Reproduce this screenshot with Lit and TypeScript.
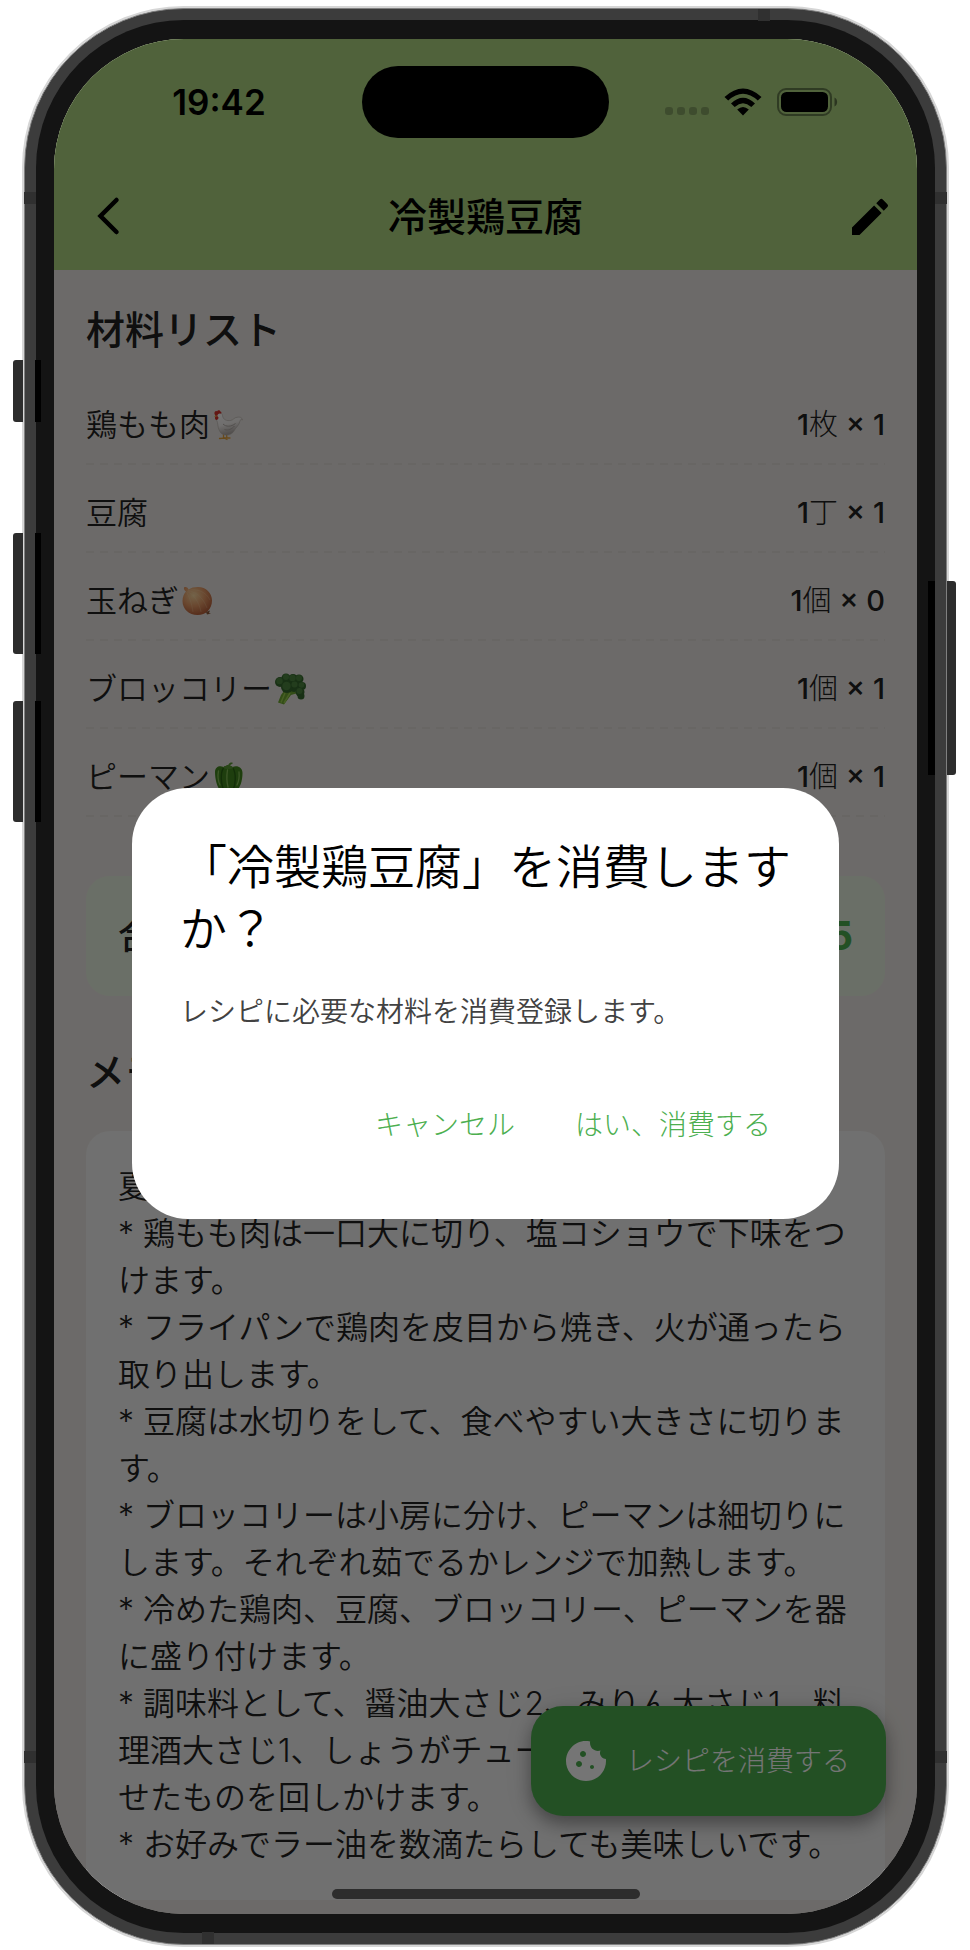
import { LitElement, html, css, svg, nothing } from "lit";
import { customElement, state } from "lit/decorators.js";

const hen = svg`
  <svg class="emoji" viewBox="0 0 32 32" role="img" aria-label="ニワトリ">
    <defs>
      <linearGradient id="hen-body" x1=".3" y1="0" x2=".6" y2="1">
        <stop offset="0" stop-color="#ffffff"/>
        <stop offset=".5" stop-color="#f4f0ee"/>
        <stop offset="1" stop-color="#a39c98"/>
      </linearGradient>
    </defs>
    <g fill="none" stroke="#e3a13c" stroke-width="1.300" stroke-linecap="round">
      <path d="M11.500 24 L11.500 29 M7.500 29.500 L12.500 29.200 L15 30.500"/>
      <path d="M14.500 24 L14.800 28.500 M12.500 29 L18 29"/>
    </g>
    <path d="M4.500 6 C6 2.500 10 3 10.500 6.500 C11 11 15 12 18.500 11.500 C21.500 11 22 8.500 25 8.300 C28 7.500 30 8.500 30.500 11 C29 10.300 28.300 10.500 28 12 C27 17 23.500 18.500 22 22 C19.500 26.500 12.500 27.500 9 24 C5 19.500 6.500 14 4.500 11 Z" fill="url(#hen-body)" stroke="#b8b1ad" stroke-width=".6"/>
    <path d="M11 15 C14 18 19 18 23.500 14.500 M12.500 20.500 C16 22 20 20 22.500 17" fill="none" stroke="#b3aca8" stroke-width="1"/>
    <path d="M2.500 5 C2 2.500 4 1.500 5 2.500 C6 .5 8 1 8.300 2.500 C9.500 2.500 9.800 4 9 4.800 C7 4 5.500 5 5.300 7 L6.500 8.500 C6.500 11 3.500 12 3 9.500 C2.800 8 4 6.500 2.500 5 Z" fill="#d8322c"/>
    <path d="M1.800 7.500 L4.500 6 L4.500 8 Z" fill="#e8b04a"/>
  </svg>`;

const onion = svg`
  <svg class="emoji" viewBox="0 0 32 32" role="img" aria-label="玉ねぎ">
    <defs>
      <radialGradient id="onion-skin" cx=".38" cy=".3" r=".75">
        <stop offset="0" stop-color="#fbd9a0"/>
        <stop offset=".5" stop-color="#e79c68"/>
        <stop offset="1" stop-color="#b65c38"/>
      </radialGradient>
    </defs>
    <path d="M3 2.500 C4.500 1.500 6.500 2 7.500 4.500 C10 2.800 13 2 17 2 C25 2 31 8 31 15.500 C31 24 25 30 16.500 30 C8 30 1.500 24 1.500 16 C1.500 12 3 8.500 5 6.500 C3.500 5.500 2.500 4 3 2.500 Z" fill="url(#onion-skin)"/>
    <g fill="none" stroke="#fbe3b8" stroke-opacity=".3" stroke-width=".8">
      <path d="M6.500 6 C14 6 22 12 26 23"/>
      <path d="M6 6.500 C12 9 18 16 20 27"/>
      <path d="M5.500 7 C8 11 11 19 12 27"/>
      <path d="M7 5.500 C16 3 25 7 29 15"/>
    </g>
    <path d="M25 27 L29 25.500 L28 28 L30 28.500 L26 29.500 Z" fill="#8b5a3c"/>
  </svg>`;

const broccoli = svg`
  <svg class="emoji" viewBox="0 0 32 32" role="img" aria-label="ブロッコリー">
    <path d="M10 18 L18 16 L24 20 L17 22 L10 31.500 L4 29.500 L7 22 Z" fill="#6fa832"/>
    <path d="M11 20 L7 29.500 M16 20 L10 30" stroke="#9bd050" stroke-width="1.500" fill="none"/>
    <g fill="#36692e">
      <circle cx="6" cy="9" r="5"/><circle cx="12" cy="5" r="4.500"/>
      <circle cx="19" cy="6" r="5"/><circle cx="25" cy="6" r="4.500"/>
      <circle cx="28" cy="13" r="4"/><circle cx="26" cy="19" r="4.500"/>
      <circle cx="27" cy="23" r="3.500"/><circle cx="20" cy="13" r="6"/>
      <circle cx="13" cy="14" r="6"/>
    </g>
    <g fill="#4c8540">
      <circle cx="5.500" cy="8" r="3.200"/><circle cx="12" cy="4" r="3"/>
      <circle cx="18.500" cy="5" r="3.200"/><circle cx="25" cy="5" r="3"/>
      <circle cx="27.500" cy="12" r="2.800"/><circle cx="25.500" cy="18" r="3"/>
      <circle cx="20.500" cy="11.500" r="3"/><circle cx="12.500" cy="13" r="4.200"/>
    </g>
  </svg>`;

const pepper = svg`
  <svg class="emoji" viewBox="0 0 32 32" role="img" aria-label="ピーマン">
    <path d="M3 11 C3 5.500 8 4 11.500 6 C14 4 18 4 20.500 6 C25 4 30.500 6 30.500 12 C30.500 20 28 27 24.500 30 C21 32 19 30.500 17 30 C14 31.500 11 31.500 9 30 C5 27 3 18 3 11 Z" fill="#43881f"/>
    <path d="M11.500 7 C8 12 9 24 12 29 M21 7 C24.500 13 23.500 24 21 29" fill="none" stroke="#2a6414" stroke-width="1.400"/>
    <path d="M6.500 10 C5.500 15 6.500 21 8 24 M15.500 9 C14.500 15 15 22 16 26 M27 11 C27.500 16 26.500 21 25 24" fill="none" stroke="#84bd57" stroke-width="1.300" stroke-linecap="round"/>
    <path d="M11 6.500 C14 4 15 5 16 4.500 C16.500 2.500 18 1 20.500 1.500 L20.500 3 C18.500 3 18.300 4 18.500 5 C20 5 21 6 21.500 7 C18 8.500 14 8.500 11 6.500 Z" fill="#5a9a35"/>
  </svg>`;

interface Ingredient {
  name: string;
  picture: unknown;
  base: string;
  unit: string;
  count: string;
}

const INGREDIENTS: Ingredient[] = [
  { name: "鶏もも肉", picture: hen, base: "1", unit: "枚", count: "1" },
  { name: "豆腐", picture: nothing, base: "1", unit: "丁", count: "1" },
  { name: "玉ねぎ", picture: onion, base: "1", unit: "個", count: "0" },
  { name: "ブロッコリー", picture: broccoli, base: "1", unit: "個", count: "1" },
  { name: "ピーマン", picture: pepper, base: "1", unit: "個", count: "1" },
];

const MEMO = [
  "夏にぴったりの冷製鶏豆腐です。",
  "* 鶏もも肉は一口大に切り、塩コショウで下味をつけます。",
  "* フライパンで鶏肉を皮目から焼き、火が通ったら取り出します。",
  "* 豆腐は水切りをして、食べやすい大きさに切ります。",
  "* ブロッコリーは小房に分け、ピーマンは細切りにします。それぞれ茹でるかレンジで加熱します。",
  "* 冷めた鶏肉、豆腐、ブロッコリー、ピーマンを器に盛り付けます。",
  "* 調味料として、醤油大さじ2、みりん大さじ1、料理酒大さじ1、しょうがチューブ1.5cmを混ぜ合わせたものを回しかけます。",
  "* お好みでラー油を数滴たらしても美味しいです。",
];

const wifiIcon = svg`
  <svg class="wifi" viewBox="0 0 38 28" aria-hidden="true">
    <path d="M0.500 9 Q19 -8 37.500 9 L33.800 12.600 Q19 -1 4.200 12.600 Z"/>
    <path d="M7 15.400 Q19 4 31 15.400 L27.300 19 Q19 11.600 10.700 19 Z"/>
    <path d="M13.200 21.600 Q19 16.400 24.800 21.600 L19 27.500 Z"/>
  </svg>`;

const batteryIcon = svg`
  <svg class="battery" viewBox="0 0 61 28" aria-hidden="true">
    <rect x="1" y="1" width="53" height="26" rx="8" fill="none" stroke="#000" stroke-opacity=".4" stroke-width="2"/>
    <rect x="4" y="4" width="47" height="20" rx="5.500"/>
    <path d="M57.500 9.500 C61 11 61 17 57.500 18.500 Z" fill-opacity=".45"/>
  </svg>`;

@customElement("app-root")
export class AppRoot extends LitElement {
  @state() private dialogOpen = true;

  static styles = css`
    :host {
      display: block;
      box-sizing: border-box;
      padding: 6px 21px 3px 22px;
      background: #fff;
      color: #212121;
      font-family: Inter, "Noto Sans CJK JP", sans-serif;
      font-weight: 350;
      font-size: 32px;
      line-height: 40px;
    }
    * { box-sizing: border-box; }
    h1, h2, p, ul, li { margin: 0; padding: 0; }
    ul { list-style: none; }
    button {
      font: inherit;
      color: inherit;
      background: none;
      border: 0;
      margin: 0;
      padding: 0;
      cursor: pointer;
    }
    svg { display: block; }

    .device {
      position: relative;
      border: 2px solid #d6d6d6;
      border-radius: 162px;
    }
    .frame {
      border: 1px solid #808080;
      border-radius: 160px;
      padding: 11px;
      background: #3c3c3c;
    }
    .bezel {
      padding: 19px 18px;
      border-radius: 148px;
      background: #141414;
    }
    .screen {
      position: relative;
      overflow: hidden;
      border-radius: 130px;
      background: #ece8e4;
      padding-bottom: 14px;
    }

    .side { position: absolute; width: 28px; }
    .side.left {
      left: -11px;
      background: linear-gradient(90deg, #2c2c2c 10px, transparent 10px 22px, #000 22px);
      border-radius: 3px 0 0 3px;
    }
    .side.right {
      right: -9px;
      background: linear-gradient(90deg, #000 7px, transparent 7px 19px, #2c2c2c 19px);
      border-radius: 0 3px 3px 0;
    }
    .silent { top: 352px; height: 62px; }
    .volume-up { top: 525px; height: 121px; }
    .volume-down { top: 693px; height: 121px; }
    .power { top: 573px; height: 194px; }
    .band { position: absolute; width: 12px; height: 12px; background: #303030; }
    .band.west { left: 0; }
    .band.east { right: 0; }
    .band.upper { top: 184px; }
    .band.lower { bottom: 182px; }
    .band.north { top: 1px; right: 177px; }
    .band.south { bottom: 1px; left: 178px; }

    header { background: #aed581; color: #000; }
    .status {
      display: grid;
      grid-template-columns: 1fr 247px 1fr;
      align-items: center;
      padding-top: 27px;
    }
    .time { justify-self: center; padding-left: 22px; font-size: 35px; font-weight: 600; }
    .island { height: 72px; border-radius: 36px; background: #000; }
    .indicators {
      display: flex;
      align-items: center;
      justify-content: flex-end;
      gap: 15px;
      padding-right: 79px;
    }
    .dots { display: flex; gap: 4px; padding-top: 18px; }
    .dots i { width: 8px; height: 8px; border-radius: 3px; background: #000; opacity: .22; }
    .wifi { width: 38px; height: 28px; }
    .battery { width: 61px; height: 28px; }

    .toolbar {
      display: grid;
      grid-template-columns: 48px 1fr 48px;
      align-items: center;
      padding: 26px 23px 0;
      height: 132px;
    }
    .toolbar svg { width: 48px; height: 48px; }
    h1 { text-align: center; font-size: 39px; font-weight: 500; line-height: 60px; }

    main { padding: 30px 32px 0; }
    h2 { font-size: 39px; font-weight: 500; line-height: 60px; }
    .ingredients { padding-top: 17px; }
    .ingredients li {
      display: flex;
      justify-content: space-between;
      padding: 28px 0 20px;
      background: repeating-linear-gradient(90deg, #e2dfdb 0 8px, transparent 8px 14px) left bottom / 100% 2px no-repeat;
    }
    .name { display: flex; align-items: center; gap: 2px; font-size: 31px; }
    .emoji { width: 32px; height: 32px; }
    .quantity { font-size: 29px; font-weight: 300; }
    .quantity b { font-weight: 500; }
    .total {
      display: flex;
      align-items: center;
      justify-content: space-between;
      margin: 59px 0 46px;
      padding: 30px 32px;
      border-radius: 24px;
      background: #e8f2e0;
      font-size: 36px;
      font-weight: 500;
      line-height: 60px;
    }
    .total output { font-size: 40px; font-weight: 700; color: #4caf50; }
    .memo {
      margin-top: 29px;
      padding: 32px;
      border-radius: 24px;
      background: #f3f3f3;
      line-height: 47px;
    }

    .fab {
      position: absolute;
      right: 31px;
      bottom: 98px;
      display: flex;
      align-items: center;
      gap: 16px;
      height: 110px;
      padding: 0 36px 0 31px;
      border-radius: 32px;
      background: #4caf50;
      color: #fff;
      font-size: 28px;
      font-weight: 300;
      box-shadow: 0 8px 16px rgba(0, 0, 0, .3), 0 4px 28px rgba(0, 0, 0, .12);
    }
    .fab svg { width: 48px; height: 48px; }

    .scrim {
      position: absolute;
      inset: 0;
      display: flex;
      align-items: center;
      padding: 54px 78px 0;
      background: rgba(0, 0, 0, .54);
    }
    .dialog {
      flex: 1;
      padding: 48px 44px 54px 48px;
      border-radius: 56px;
      background: #fff;
    }
    .dialog h2 { color: #000; font-size: 47px; font-weight: 350; line-height: 62px; }
    .dialog p { padding: 32px 0 53px; font-size: 28px; color: #424242; }
    .actions { display: flex; justify-content: flex-end; gap: 12px; font-size: 28px; font-weight: 300; color: #4caf50; }
    .actions button { height: 80px; padding: 0 24px; }

    .home {
      position: absolute;
      left: 50%;
      bottom: 15px;
      width: 308px;
      height: 10px;
      margin-left: -154px;
      border-radius: 5px;
      background: #2d2d2d;
    }
  `;

  private renderRow(item: Ingredient) {
    return html`
      <li>
        <span class="name">${item.name}${item.picture}</span>
        <span class="quantity"><b>${item.base}</b>${item.unit}<b> × ${item.count}</b></span>
      </li>`;
  }

  render() {
    return html`
      <div class="device">
        <div class="frame">
          <div class="bezel">
            <div class="screen">
              <header>
                <div class="status">
                  <span class="time">19:42</span>
                  <span class="island"></span>
                  <span class="indicators">
                    <span class="dots"><i></i><i></i><i></i><i></i></span>
                    ${wifiIcon}${batteryIcon}
                  </span>
                </div>
                <div class="toolbar">
                  <button aria-label="戻る">
                    <svg viewBox="0 0 48 48" fill="none" stroke="#000" stroke-width="4.500" stroke-linecap="round">
                      <path d="M39.500 7 L23.500 23 L39.500 39"/>
                    </svg>
                  </button>
                  <h1>冷製鶏豆腐</h1>
                  <button aria-label="編集">
                    <svg viewBox="0 0 24 24">
                      <path d="M3 17.250V21h3.750L17.810 9.940l-3.750-3.750L3 17.250zM20.710 7.040a.996.996 0 0 0 0-1.410l-2.340-2.340a.996.996 0 0 0-1.410 0l-1.830 1.830 3.750 3.750 1.830-1.830z"/>
                    </svg>
                  </button>
                </div>
              </header>
              <main>
                <h2>材料リスト</h2>
                <ul class="ingredients">${INGREDIENTS.map((item) => this.renderRow(item))}</ul>
                <div class="total"><span>合計</span><output>5</output></div>
                <h2>メモ</h2>
                <div class="memo">${MEMO.map((line) => html`<p>${line}</p>`)}</div>
              </main>
              <button class="fab" @click=${() => (this.dialogOpen = true)}>
                <svg viewBox="0 0 24 24" fill="currentColor" aria-hidden="true">
                  <path d="M21.950 10.990c-1.790-.03-3.700-1.950-2.680-4.220-2.980 1-5.770-1.590-5.190-4.560C6.950.71 2 6.580 2 12c0 5.520 4.480 10 10 10 5.890 0 10.540-5.080 9.950-11.010zM8.500 15c-.83 0-1.500-.67-1.500-1.500S7.670 12 8.500 12s1.500.67 1.500 1.500S9.330 15 8.500 15zm2-5C9.670 10 9 9.330 9 8.500S9.670 7 10.500 7s1.500.67 1.500 1.500-.67 1.500-1.500 1.500zm4.500 6c-.55 0-1-.45-1-1s.45-1 1-1 1 .45 1 1-.45 1-1 1z"/>
                </svg>
                <span>レシピを消費する</span>
              </button>
              ${this.dialogOpen
                ? html`
                    <div class="scrim">
                      <div class="dialog" role="alertdialog" aria-labelledby="ask" aria-describedby="detail">
                        <h2 id="ask">「冷製鶏豆腐」を消費しますか？</h2>
                        <p id="detail">レシピに必要な材料を消費登録します。</p>
                        <div class="actions">
                          <button @click=${() => (this.dialogOpen = false)}>キャンセル</button>
                          <button @click=${() => (this.dialogOpen = false)}>はい、消費する</button>
                        </div>
                      </div>
                    </div>`
                : nothing}
              <span class="home"></span>
            </div>
          </div>
        </div>
        <i class="band west upper"></i><i class="band east upper"></i>
        <i class="band west lower"></i><i class="band east lower"></i>
        <i class="band north"></i><i class="band south"></i>
        <i class="side left silent"></i>
        <i class="side left volume-up"></i>
        <i class="side left volume-down"></i>
        <i class="side right power"></i>
      </div>
    `;
  }
}
